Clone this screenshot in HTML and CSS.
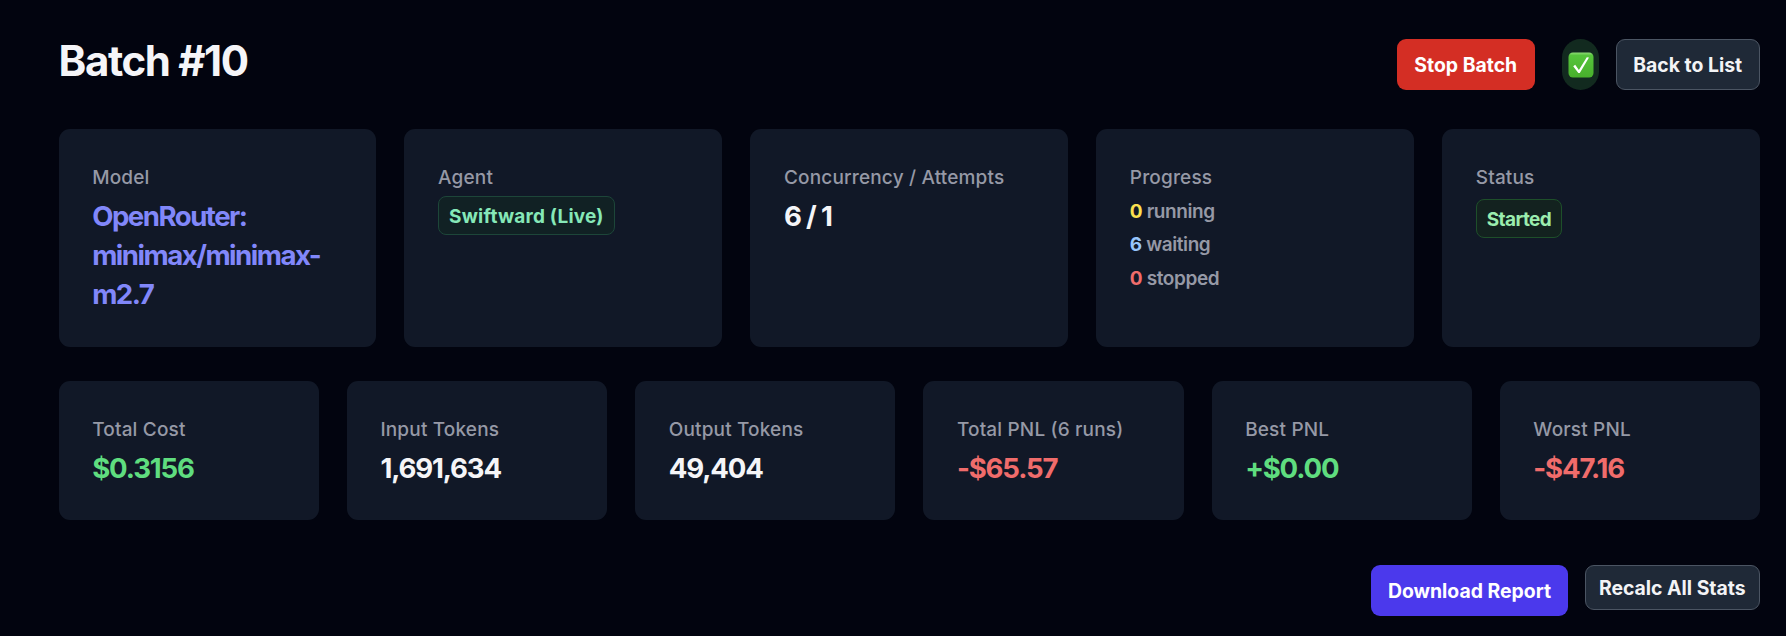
FILE: index.html
```html
<!DOCTYPE html>
<html lang="en">
<head>
  <meta charset="UTF-8" />
  <title>Batch #10</title>
  <link rel="stylesheet" href="styles.css">
</head>
<body>
  <header class="page-header">
    <h1>Batch #10</h1>
    <div class="header-actions">
      <button class="btn btn-danger">Stop Batch</button>
      <span class="live-badge">
        <svg width="26" height="26" viewBox="0 0 26 26">
          <defs>
            <linearGradient id="check-bg" x1="0" y1="0" x2="0" y2="1">
              <stop offset="0" stop-color="#8fdc76" />
              <stop offset="0.12" stop-color="#56c43c" />
              <stop offset="1" stop-color="#48b02c" />
            </linearGradient>
          </defs>
          <rect x="0.5" y="0.5" width="25" height="25" rx="4.5" fill="url(#check-bg)" />
          <path d="M5.2 14.2 L7.2 12.8 L10.9 18 L18.8 5.2 L21 5.6 L11.8 21 L10.3 21 Z" fill="#fff" />
        </svg>
      </span>
      <button class="btn btn-secondary">Back to List</button>
    </div>
  </header>

  <section class="grid grid-info">
    <div class="card">
      <div class="label">Model</div>
      <div class="value model">OpenRouter: minimax/minimax-m2.7</div>
    </div>
    <div class="card">
      <div class="label">Agent</div>
      <span class="chip chip-agent">Swiftward (Live)</span>
    </div>
    <div class="card">
      <div class="label">Concurrency / Attempts</div>
      <div class="value">6 / 1</div>
    </div>
    <div class="card">
      <div class="label">Progress</div>
      <div class="progress">
        <div><b class="yellow">0</b> running</div>
        <div><b class="blue">6</b> waiting</div>
        <div><b class="red">0</b> stopped</div>
      </div>
    </div>
    <div class="card">
      <div class="label">Status</div>
      <span class="chip chip-started">Started</span>
    </div>
  </section>

  <section class="grid grid-stats">
    <div class="card">
      <div class="label">Total Cost</div>
      <div class="value green">$0.3156</div>
    </div>
    <div class="card">
      <div class="label">Input Tokens</div>
      <div class="value">1,691,634</div>
    </div>
    <div class="card">
      <div class="label">Output Tokens</div>
      <div class="value">49,404</div>
    </div>
    <div class="card">
      <div class="label">Total PNL (6 runs)</div>
      <div class="value red">-$65.57</div>
    </div>
    <div class="card">
      <div class="label">Best PNL</div>
      <div class="value green">+$0.00</div>
    </div>
    <div class="card">
      <div class="label">Worst PNL</div>
      <div class="value red">-$47.16</div>
    </div>
  </section>

  <div class="footer-actions">
    <button class="btn btn-primary">Download Report</button>
    <button class="btn btn-secondary btn-small">Recalc All Stats</button>
  </div>
</body>
</html>
```
FILE: styles.css
```css
* {
  box-sizing: border-box;
}
body {
  margin: 0;
  padding: 39px 26px 0 58.6px;
  height: 636px;
  overflow: hidden;
  background-color: #02040f;
  color: #f5f5f8;
  font-family: Inter, "Liberation Sans", sans-serif;
  font-size: 19px;
}
h1 {
  margin: 0;
  font-size: 42px;
  line-height: 44px;
  font-weight: 750;
  letter-spacing: -1.4px;
}
.page-header {
  display: flex;
  justify-content: space-between;
  align-items: flex-start;
  height: 90px;
}
.header-actions {
  display: flex;
}
.btn {
  height: 51px;
  padding: 1px 0 0;
  border: none;
  border-radius: 9px;
  font-family: inherit;
  font-size: 19.4px;
  font-weight: 650;
  color: #f3f4f6;
  text-align: center;
  white-space: nowrap;
}
.btn-danger {
  width: 138.5px;
  background-color: #d42e24;
  color: white;
}
.btn-primary {
  width: 197px;
  background-color: #4b39ec;
  color: white;
}
.btn-secondary {
  width: 144.5px;
  background-color: #1f2937;
  border: 1.4px solid #4b5563;
}
.btn-small {
  width: 175.5px;
  height: 45px;
}
.live-badge {
  display: flex;
  align-items: center;
  justify-content: center;
  width: 37px;
  height: 51px;
  margin: 0 16.5px 0 27px;
  border-radius: 19px;
  background-color: #122a1f;
}
.grid {
  display: grid;
  gap: 28px;
}
.grid-info {
  grid-template-columns: repeat(5, 1fr);
  height: 218.4px;
  margin-bottom: 33.6px;
}
.grid-stats {
  grid-template-columns: repeat(6, 1fr);
  height: 139.5px;
  margin-bottom: 44.5px;
}
.card {
  padding: 34.6px 33.6px 32px;
  border-radius: 11px;
  background-color: #111827;
}
.label {
  line-height: 28px;
  font-weight: 500;
  letter-spacing: 0.17px;
  color: #9699a6;
  white-space: nowrap;
}
.value {
  margin-top: 5px;
  font-size: 27.6px;
  line-height: 39.2px;
  font-weight: 650;
  letter-spacing: -1.15px;
}
.model {
  color: #8187fa;
  letter-spacing: -1.5px;
}
.chip {
  display: inline-block;
  height: 39.5px;
  padding: 0 10px;
  border: 1.4px solid;
  border-radius: 8px;
  line-height: 39px;
  font-weight: 650;
  white-space: nowrap;
}
.chip-agent {
  margin-top: 4px;
  color: #86e8b8;
  background-color: #112124;
  border-color: #1d4639;
  letter-spacing: 0.2px;
}
.chip-started {
  margin-top: 7px;
  color: #9bedae;
  background-color: #13221f;
  border-color: #1e4f2a;
  letter-spacing: -0.6px;
}
.progress {
  margin-top: 3.2px;
  line-height: 33.6px;
  font-weight: 600;
  letter-spacing: -0.4px;
  color: #9699a6;
}
.progress b {
  font-weight: 700;
}
.green {
  color: #5fdd7f;
}
.red {
  color: #f06c6b;
}
.progress .yellow {
  color: #fbe04f;
}
.progress .blue {
  color: #97c5fc;
}
.footer-actions {
  display: flex;
  justify-content: flex-end;
  align-items: flex-start;
  gap: 16.5px;
}
```
